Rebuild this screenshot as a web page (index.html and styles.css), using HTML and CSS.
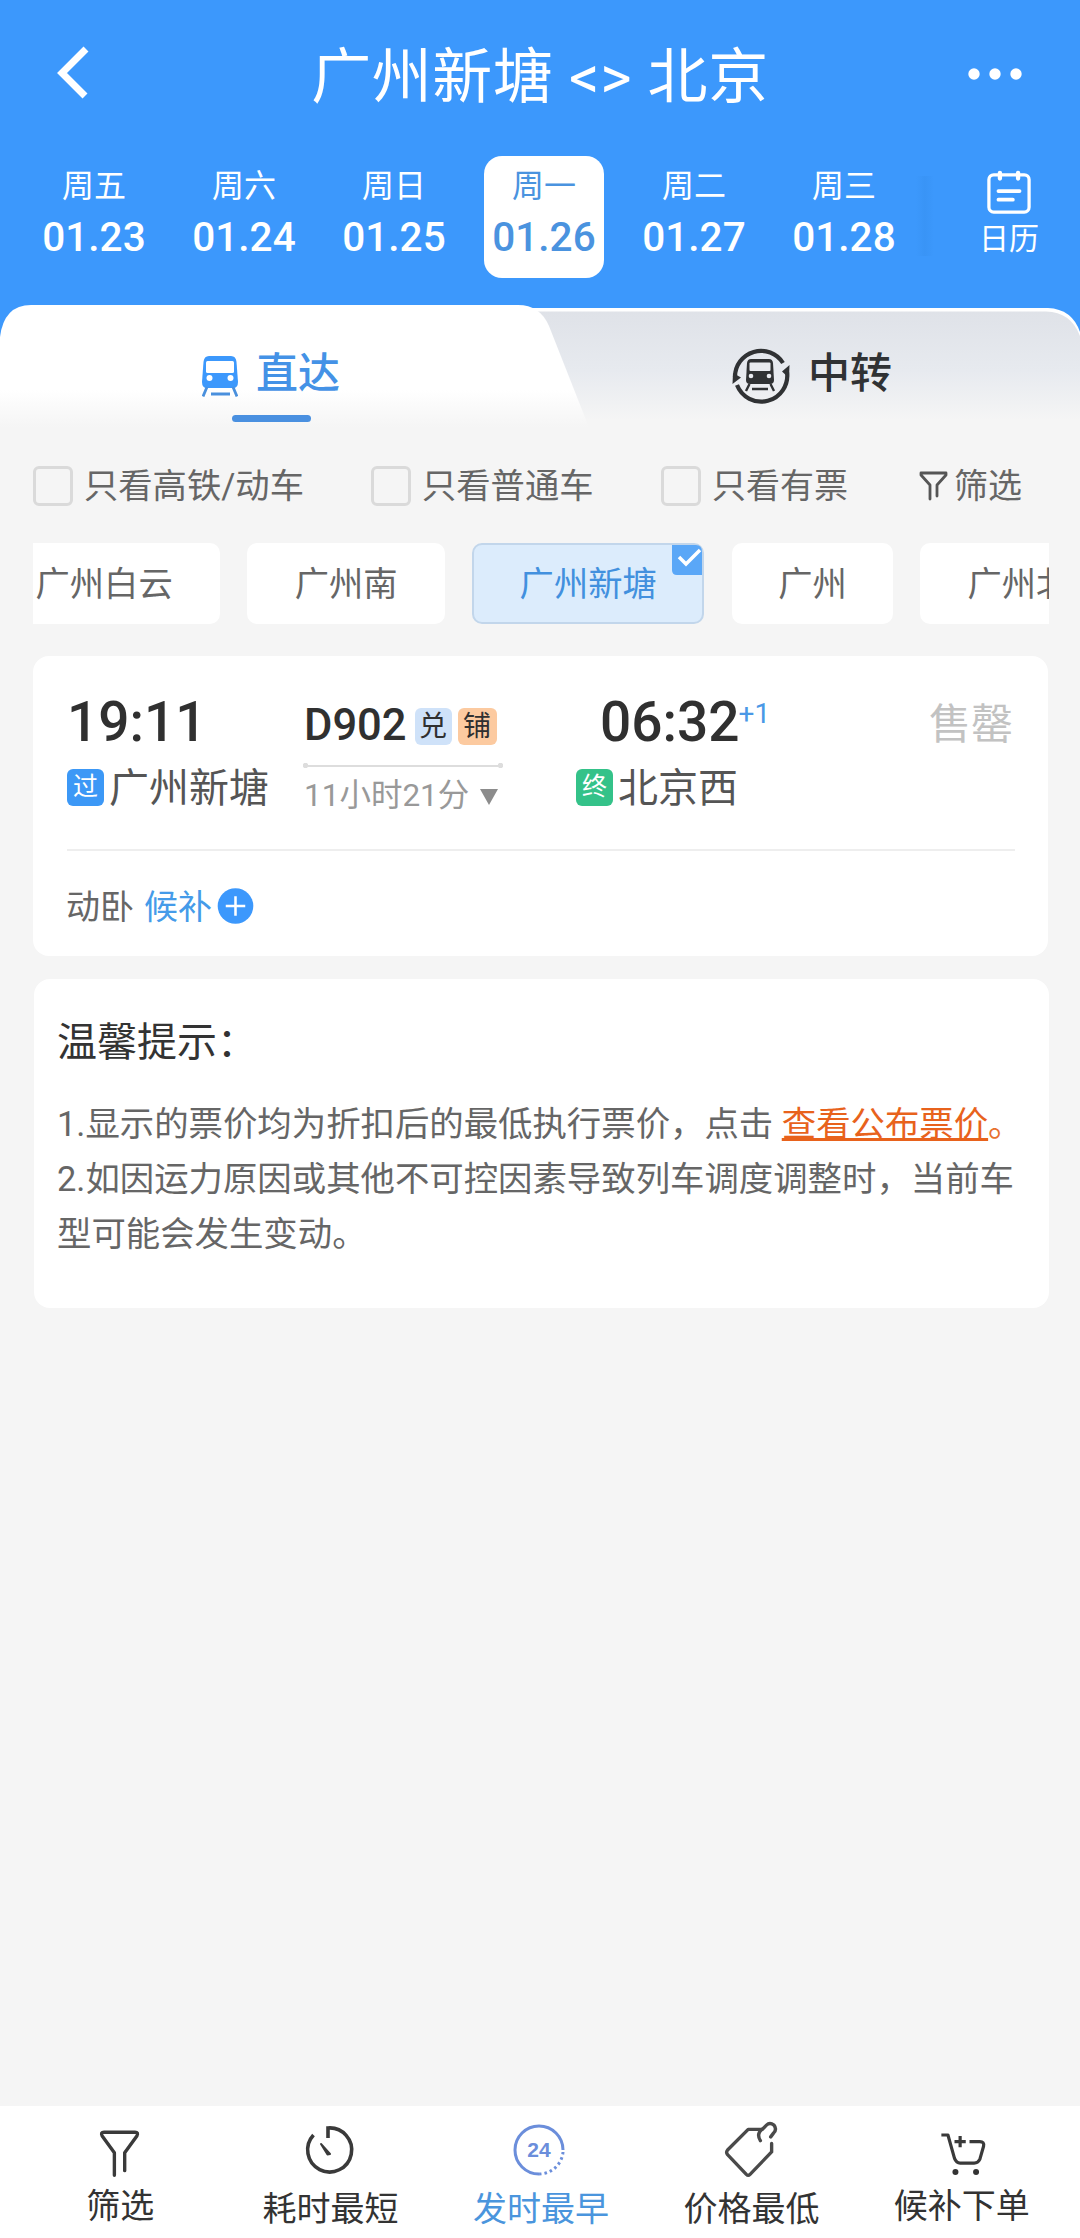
FILE: index.html
```html
<!DOCTYPE html>
<html lang="zh-CN">
<head>
<meta charset="utf-8">
<title>广州新塘 - 北京</title>
<link rel="stylesheet" href="styles.css">
</head>
<body>
<div class="app">
  <header class="header">
    <div class="navbar">
      <svg class="back" width="40" height="60" viewBox="0 0 40 60"><path d="M33 7 9 31 32 54" fill="none" stroke="#fff" stroke-width="7"/></svg>
      <h1 class="title">广州新塘 &lt;&gt; 北京</h1>
      <svg class="more" width="60" height="20" viewBox="0 0 60 20" fill="#fff"><circle cx="10" cy="10" r="5.7"/><circle cx="31" cy="10" r="5.7"/><circle cx="52" cy="10" r="5.7"/></svg>
    </div>
    <div class="dates">
      <div class="day"><span class="week">周五</span><span class="date">01.23</span></div>
      <div class="day"><span class="week">周六</span><span class="date">01.24</span></div>
      <div class="day"><span class="week">周日</span><span class="date">01.25</span></div>
      <div class="day day-on"><span class="week">周一</span><span class="date">01.26</span></div>
      <div class="day"><span class="week">周二</span><span class="date">01.27</span></div>
      <div class="day"><span class="week">周三</span><span class="date">01.28</span></div>
      <div class="edge"></div>
      <div class="calendar">
        <svg width="44" height="44" viewBox="0 0 46 46" fill="none" stroke="#fff" stroke-width="3.4" stroke-linecap="round"><rect x="2" y="5" width="42" height="39" rx="5"/><path d="M13.500 3v6M32.500 3v6" stroke-width="4.500"/><path d="M12 22h22M12 31h15" stroke-width="4"/></svg>
        <span class="cal-text">日历</span>
      </div>
    </div>
  </header>

  <div class="tabs">
    <svg class="tab-shape" width="1080" height="125" viewBox="0 0 1080 125">
      <defs>
        <linearGradient id="gray" x1="0" y1="0" x2="0" y2="1"><stop offset="0" stop-color="#dfe2e8"/><stop offset=".5" stop-color="#e7eaef"/><stop offset=".92" stop-color="#f5f5f5"/></linearGradient>
        <linearGradient id="white" x1="0" y1="0" x2="0" y2="1"><stop offset="0" stop-color="#fff"/><stop offset=".68" stop-color="#fff"/><stop offset=".98" stop-color="#f5f5f5"/></linearGradient>
      </defs>
      <path d="M0 0H1080V40H0Z" fill="#3c98fc"/>
      <path d="M300 3H1048Q1072 4 1080 27V60H300Z" fill="#fff"/>
      <path d="M300 6.500H1046Q1071 7 1080 31V125H0V60H300Z" fill="url(#gray)"/>
      <path d="M0 32Q4 0 31 0H518Q540 0 549 21L590 125H0Z" fill="url(#white)"/>
    </svg>
    <div class="tab tab-on">
      <svg class="train" width="36" height="41" viewBox="0 0 36 41"><path d="M7 0H29Q34 0 34.500 6L36 26Q36 32 31 32H5Q0 32 0 26L1.500 6Q2 0 7 0Z" fill="#3c98fc"/><rect x="4" y="5" width="28" height="12" rx="1.500" fill="#fff"/><circle cx="7.500" cy="22" r="3" fill="#fff"/><circle cx="28.500" cy="22" r="3" fill="#fff"/><path d="M5 31 1 40.500M31 31l4 9.500M9 38H28" stroke="#4a90dd" stroke-width="2.800" fill="none"/></svg>
      <span class="tab-text">直达</span>
      <i class="tab-line"></i>
    </div>
    <div class="tab tab-off">
      <svg class="transfer" width="60" height="60" viewBox="0 0 60 60">
        <g fill="none" stroke="#303234" stroke-width="4.200"><path d="M5 31A26 26 0 0 1 53 17"/><path d="M57 26A26 26 0 0 1 7 39"/></g>
        <path d="M2.500 38 3 27l8 4.500ZM59.500 19 59 32l-7-6.500Z" fill="#303234"/>
        <path d="M21 13H39Q42.500 13 43 17L44 34Q44 38 40 38H20Q16 38 16 34L17 17Q17.500 13 21 13Z" fill="#303234"/><rect x="19.500" y="16.500" width="21" height="8.500" rx="1" fill="#e9ebef"/><circle cx="21" cy="30" r="2.300" fill="#e9ebef"/><circle cx="39" cy="30" r="2.300" fill="#e9ebef"/><path d="M19.500 38l-3.500 7M40.500 38l3.500 7M22 43H38" stroke="#303234" stroke-width="2.400"/>
      </svg>
      <span class="tab-text">中转</span>
    </div>
  </div>

  <div class="filters">
    <label class="check check-a"><i class="box"></i>只看高铁/动车</label>
    <label class="check check-b"><i class="box"></i>只看普通车</label>
    <label class="check check-c"><i class="box"></i>只看有票</label>
    <div class="filter-btn"><svg width="29" height="32" viewBox="0 0 29 32" fill="none" stroke="#555" stroke-width="2.800" stroke-linejoin="round" stroke-linecap="round"><path d="M11 29V15L2 5V3H27V5L18 15V26"/></svg>筛选</div>
  </div>

  <div class="chips">
    <div class="chip chip-first">广州白云</div>
    <div class="chip">广州南</div>
    <div class="chip chip-on">广州新塘<svg class="tick" width="30" height="30" viewBox="0 0 30 30"><path d="M0 0H24Q30 0 30 7V30H5Q0 30 0 25Z" fill="#5aa7f7"/><path d="M7 12 14 19 28 5" fill="none" stroke="#fff" stroke-width="3.500"/></svg></div>
    <div class="chip chip-short">广州</div>
    <div class="chip">广州北</div>
  </div>

  <section class="card train-card">
    <div class="trip">
      <div class="from">
        <div class="time">19:11</div>
        <div class="station"><span class="badge badge-pass">过</span><span class="name">广州新塘</span></div>
      </div>
      <div class="middle">
        <div class="code">D902<span class="tag tag-dui">兑</span><span class="tag tag-pu">铺</span></div>
        <div class="rail"></div>
        <div class="duration">11小时21分<i class="caret"></i></div>
      </div>
      <div class="to">
        <div class="time time-to">06:32<sup class="plus-day">+1</sup></div>
        <div class="station"><span class="badge badge-end">终</span><span class="name">北京西</span></div>
      </div>
      <div class="sold">售罄</div>
    </div>
    <div class="seats"><span class="seat-name">动卧<span class="wait">候补</span></span><svg width="37" height="38" viewBox="0 0 38 38"><circle cx="19" cy="19" r="18.300" fill="#3c98fc"/><path d="M9 19H29M19 9V29" stroke="#fff" stroke-width="2.600"/></svg></div>
  </section>

  <section class="card tips">
    <h2 class="tips-title">温馨提示：</h2>
    <p class="tips-text tips-one">1.显示的票价均为折扣后的最低执行票价，点击 <span class="stop"><a class="link">查看公布票价</a>。</span></p>
    <p class="tips-text">2.如因运力原因或其他不可控因素导致列车调度调整时，当前车型可能会发生变动。</p>
  </section>

  <nav class="bottom">
    <div class="item item-up">
      <svg width="60" height="64" viewBox="0 0 60 64" fill="none" stroke="#3a3a3a" stroke-width="3.600" stroke-linejoin="round" stroke-linecap="round"><path d="M24 59V35L11 17Q9 13 13 13H46Q50 13 48 17L35 35V54"/></svg>
      <span>筛选</span>
    </div>
    <div class="item">
      <svg class="clock" width="60" height="60" viewBox="0 0 60 60" fill="none" stroke="#3a3a3a" stroke-width="3.600"><path d="M14.500 15A22 22 0 1 0 29 8V18"/><path d="M22 24 31 34 28.500 34.500Z" fill="#3a3a3a" stroke-width="2" stroke-linejoin="round"/></svg>
      <span>耗时最短</span>
    </div>
    <div class="item item-on">
      <svg width="60" height="60" viewBox="0 0 60 60" fill="none" stroke="#6b8edb" stroke-width="3"><path d="M28 54A24 24 0 1 1 52 30"/><path d="M52 32A24 24 0 0 1 28 54" stroke-dasharray="2.500 3"/><text x="28" y="37" class="clock-text">24</text></svg>
      <span>发时最早</span>
    </div>
    <div class="item">
      <svg width="60" height="64" viewBox="0 0 60 64" fill="none" stroke="#4a4a4a" stroke-width="3.600" stroke-linejoin="round" stroke-linecap="round"><path d="M42 10H27L5 32Q3 34.500 5 37L25 58Q27 60 29 58L52 34V25"/><path d="M40 22Q35 14 43 9L46.500 5.500Q50 2 54.500 5.500Q58 10 54 14L51 18"/></svg>
      <span>价格最低</span>
    </div>
    <div class="item item-up">
      <svg width="60" height="64" viewBox="0 0 60 64" fill="none" stroke="#3a3a3a" stroke-width="3.400" stroke-linejoin="round"><path d="M8 16H15L22 41Q24 46 28 46H43Q47 46 49 42L53 28Q54 23 49 23H38M22 23H34M28 17V29"/><circle cx="23" cy="55.500" r="3.200" fill="#333" stroke="none"/><circle cx="45" cy="55.500" r="3.200" fill="#333" stroke="none"/></svg>
      <span>候补下单</span>
    </div>
  </nav>
</div>
</body>
</html>
```

FILE: styles.css
```css
* { box-sizing: border-box; }
body {
  margin: 0;
  background: #f5f5f5;
  font-family: Roboto, "Noto Sans CJK SC", sans-serif;
  font-size: 34px;
  color: #666;
}
i { font-style: normal; }
svg { display: block; flex: none; }
.app { width: 1080px; height: 2238px; display: flex; flex-direction: column; overflow: hidden; }

.header { height: 305px; flex: none; background: #3c98fc; color: #fff; }
.navbar { height: 156px; padding: 0 56px 0 53px; display: flex; align-items: center; justify-content: space-between; }
.back { margin-bottom: 13px; }
.title { margin: 0 0 1px 23px; font-size: 60px; line-height: 80px; font-weight: 400; letter-spacing: .6px; white-space: nowrap; }
.more { margin-bottom: 8px; }
.dates { display: flex; padding-left: 34px; }
.day { width: 120px; height: 122px; margin-right: 30px; padding-top: 11px; border-radius: 18px; display: flex; flex-direction: column; align-items: center; }
.day-on { background: #fff; color: #4a93df; }
.week { font-size: 32px; line-height: 38px; }
.date { font-size: 40.500px; line-height: 48px; font-weight: 500; margin-top: 8px; }
.edge { width: 18px; height: 80px; margin: 20px 0 0 -18px; background: linear-gradient(90deg, #3c98fc00, #3994f6, #3c98fc00); }
.calendar { margin-left: 45px; padding-top: 14px; display: flex; flex-direction: column; align-items: center; }
.cal-text { font-size: 30px; line-height: 36px; margin-top: 7px; }

.tabs { position: relative; height: 125px; flex: none; display: grid; grid-template-columns: 540px 540px; }
.tab-shape { position: absolute; inset: 0; }
.tab { position: relative; display: flex; align-items: flex-start; font-size: 42px; font-weight: 500; }
.tab-text { line-height: 50px; margin-top: 2px; }
.tab-on { padding: 42px 0 0 202px; color: #4492e6; }
.tab-on .tab-text { margin-left: 18px; }
.train { margin-top: 9px; }
.tab-line { position: absolute; left: 232px; top: 110px; width: 79px; height: 7px; border-radius: 4px; background: #4a90e0; }
.tab-off { padding: 42px 0 0 190px; color: #303234; }
.transfer { margin-top: -1px; }
.tab-off .tab-text { margin-left: 18px; }

.filters { height: 113px; flex: none; display: flex; align-items: center; padding: 0 0 1px 33px; line-height: 50px; white-space: nowrap; }
.check { display: flex; align-items: center; gap: 11px; }
.check-a { width: 338px; font-size: 34.300px; }
.check-b { width: 290px; font-size: 34.300px; }
.check-c { width: 258px; }
.box { width: 40px; height: 40px; border: 3px solid #dadada; border-radius: 6px; }
.filter-btn { display: flex; align-items: center; gap: 6px; }

.chips { height: 81px; flex: none; margin: 0 31px 0 33px; display: flex; gap: 27px; overflow: hidden; }
.chip { flex: none; position: relative; padding: 0 47.500px; border-radius: 10px; background: #fff; font-size: 34.300px; line-height: 82px; }
.chip-first { margin-left: -45px; }
.chip-on { padding: 0 45.500px; line-height: 78px; border: 2px solid #c2d6eb; background: #dcecfc; color: #4290de; }
.chip-short { margin-left: 1px; padding: 0 46px; }
.tick { position: absolute; right: 0; top: 0; }

.card { flex: none; background: #fff; border-radius: 16px; }
.train-card { margin: 32px 32px 0 33px; height: 300px; padding: 0 33px 0 34px; }
.trip { height: 195px; border-bottom: 2px solid #eee; display: flex; }
.from { width: 236px; padding-top: 33px; }
.time { font-size: 55px; line-height: 66px; font-weight: 500; color: #303030; }
.station { display: flex; align-items: center; font-size: 40px; line-height: 50px; margin-top: 5px; color: #555; white-space: nowrap; }
.name { padding-top: 4px; }
.badge { width: 37px; height: 37px; margin-right: 5px; border-radius: 6px; color: #fff; font-size: 25px; line-height: 36px; text-align: center; }
.badge-pass { background: #3c98f6; }
.badge-end { background: #34c289; }
.middle { width: 273px; padding-top: 42px; }
.code { display: flex; align-items: center; font-size: 43.500px; line-height: 56px; font-weight: 500; color: #303030; padding-left: 1px; }
.tag { width: 37px; height: 37px; margin-left: 8px; border-radius: 6px; font-size: 28px; line-height: 37px; font-weight: 400; text-align: center; }
.tag-dui { background: #cfe2f9; }
.tag-pu { width: 39px; margin-left: 6px; background: #fccaa0; }
.rail { width: 200px; height: 5px; margin-top: 9px; background: radial-gradient(circle at 2.500px 2.500px, #ddd 2.500px, transparent 3px), radial-gradient(circle at 197.500px 2.500px, #ddd 2.500px, transparent 3px), linear-gradient(transparent 2px, #ddd 2px, #ddd 4px, transparent 4px); }
.duration { display: flex; align-items: center; font-size: 31.500px; line-height: 40px; margin-top: 8px; padding-left: 1px; color: #999; }
.caret { margin-left: 11px; border: 9.500px solid transparent; border-top: 16px solid #8c8c8c; border-bottom: 0; margin-top: 1px; }
.to { padding-top: 33px; }
.time-to { padding-left: 24px; display: flex; }
.plus-day { font-size: 28px; line-height: 32px; font-weight: 400; color: #4a98e6; margin: 9px 0 0 -1px; }
.sold { margin: 39px 2px 0 auto; font-size: 42px; line-height: 60px; color: #c2c2c2; }
.seats { display: flex; align-items: center; height: 109px; }
.seat-name { margin: 0 0 3px -1px; }
.wait { margin: 0 5px 0 10px; color: #459be9; }

.tips { margin: 23px 31px 0 34px; height: 329px; padding: 36px 0 0 23px; }
.tips-title { margin: 0 0 26px; font-size: 40px; line-height: 56px; font-weight: 400; color: #333; }
.tips-text { margin: 0; font-size: 34.400px; line-height: 55px; width: 962px; }
.tips-one { white-space: nowrap; }
.link { color: #e8621c; text-decoration: underline; text-decoration-thickness: 3px; text-underline-offset: 2px; text-decoration-skip-ink: none; }
.stop { color: #e8712e; }

.bottom { margin-top: auto; height: 132px; flex: none; padding: 0 13px 0 15px; background: #fff; display: grid; grid-template-columns: repeat(5, 1fr); color: #333; }
.item { display: flex; flex-direction: column; align-items: center; justify-content: space-between; padding: 14px 0 8px; line-height: 42px; white-space: nowrap; }
.item-up { padding-bottom: 11px; }
.item-on { color: #4a95dd; }
.item svg { height: 60px; overflow: visible; }
.clock { margin-right: 4px; }
.clock-text { font: bold 21px "Liberation Sans", sans-serif; fill: #6b8edb; stroke: none; text-anchor: middle; }
```
